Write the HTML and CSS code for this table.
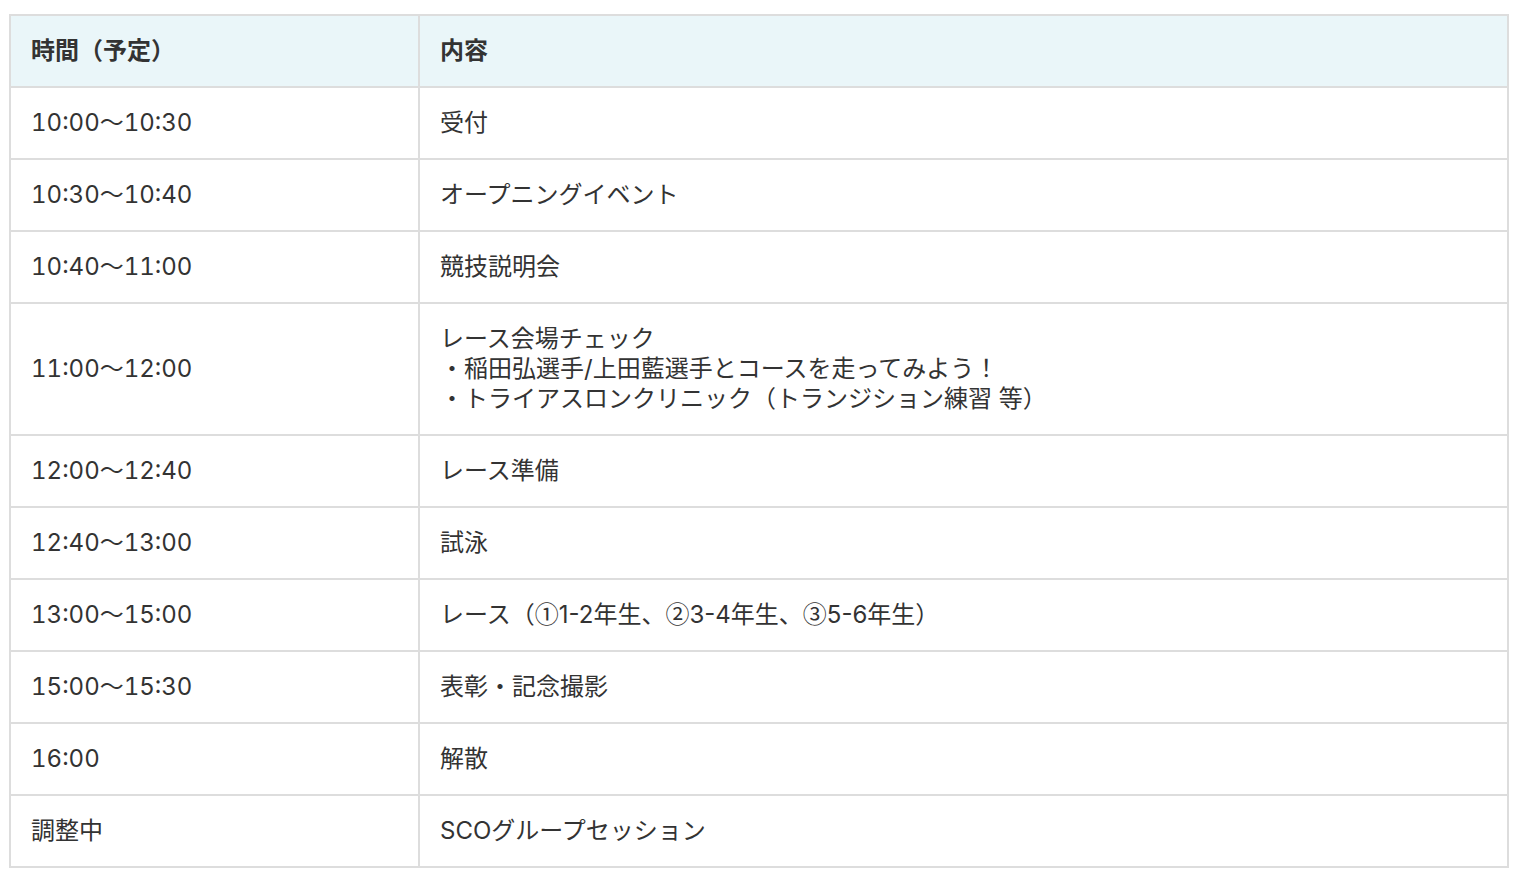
FILE: index.html
```html
<!DOCTYPE html>
<html lang="ja">
<head>
<meta charset="utf-8">
<title>スケジュール</title>
<link rel="stylesheet" href="styles.css">
</head>
<body>
<table class="schedule">
  <thead>
    <tr><th class="col-time">時間（予定）</th><th>内容</th></tr>
  </thead>
  <tbody>
    <tr><td class="time">10:00〜10:30</td><td>受付</td></tr>
    <tr><td class="time">10:30〜10:40</td><td>オープニングイベント</td></tr>
    <tr><td class="time">10:40〜11:00</td><td>競技説明会</td></tr>
    <tr><td class="time">11:00〜12:00</td><td>レース会場チェック<br>・稲田弘選手/上田藍選手とコースを走ってみよう！<br>・トライアスロンクリニック（トランジション練習 等）</td></tr>
    <tr><td class="time">12:00〜12:40</td><td>レース準備</td></tr>
    <tr><td class="time">12:40〜13:00</td><td>試泳</td></tr>
    <tr><td class="time">13:00〜15:00</td><td>レース（<span class="cjk">①</span>1-2年生、<span class="cjk">②</span>3-4年生、<span class="cjk">③</span>5-6年生）</td></tr>
    <tr><td class="time">15:00〜15:30</td><td>表彰・記念撮影</td></tr>
    <tr><td class="time">16:00</td><td>解散</td></tr>
    <tr><td class="time">調整中</td><td>SCOグループセッション</td></tr>
  </tbody>
</table>
</body>
</html>
```
FILE: styles.css
```css
html, body {
  margin: 0;
  padding: 0;
  background: #ffffff;
}
body {
  padding: 14px 0 0 9px;
  font-family: Inter, "Noto Sans CJK JP", sans-serif;
  color: #333333;
}
.schedule {
  border-collapse: collapse;
  width: 1500px;
  font-size: 24px;
  line-height: 30px;
}
.schedule th,
.schedule td {
  border: 2px solid #dddddd;
  padding: 20px 20px;
  text-align: left;
  vertical-align: middle;
}
.schedule th {
  background: #eaf6f9;
  font-weight: bold;
}
.col-time {
  width: 367px;
}
.time {
  font-variant-numeric: tabular-nums;
}
.cjk {
  font-family: "Noto Sans CJK JP", sans-serif;
  line-height: 1;
}
```
